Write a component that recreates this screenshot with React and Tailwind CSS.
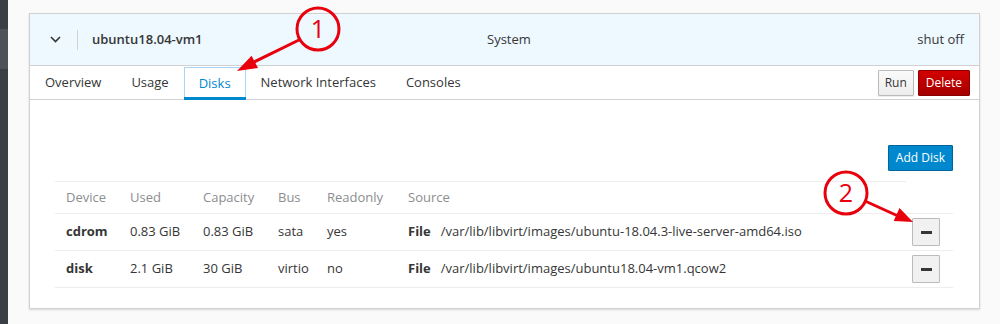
import React from 'react';

const font = { fontFamily: '"Open Sans", "Noto Sans", sans-serif' };

const disks = [
  { device: 'cdrom', used: '0.83 GiB', capacity: '0.83 GiB', bus: 'sata', readonly: 'yes', path: '/var/lib/libvirt/images/ubuntu-18.04.3-live-server-amd64.iso' },
  { device: 'disk', used: '2.1 GiB', capacity: '30 GiB', bus: 'virtio', readonly: 'no', path: '/var/lib/libvirt/images/ubuntu18.04-vm1.qcow2' },
];

const tabs = ['Overview', 'Usage', 'Disks', 'Network Interfaces', 'Consoles'];

const Annotations = () => (
  <svg className="absolute inset-0 pointer-events-none" width="1000" height="324" viewBox="0 0 1000 324">
    <g stroke="#e8000d" strokeWidth="3" fill="none">
      <circle cx="318" cy="29" r="21" />
      <line x1="301" y1="39" x2="252" y2="63" />
      <circle cx="846" cy="193" r="21" />
      <line x1="865" y1="201" x2="898" y2="216" />
    </g>
    <polygon points="237,71 258,68 251.6,55.7" fill="#e8000d" />
    <polygon points="913,222 893.7,220.9 899.5,208.1" fill="#e8000d" />
    <text x="318" y="38" textAnchor="middle" fill="#e8000d" fontSize="25" style={font}>1</text>
    <text x="846" y="202" textAnchor="middle" fill="#e8000d" fontSize="25" style={font}>2</text>
  </svg>
);

const App = () => {
  return (
    <div className="relative w-[1000px] h-[324px] flex bg-[#fafafa] overflow-hidden text-[#363636]" style={font}>
      <div className="w-[8px] flex flex-col bg-[#393f44]">
        <div className="h-[29px]" />
        <div className="h-[40px] bg-[#4d5258]" />
      </div>

      <div className="flex-1 pl-[21px] pr-[20px] pt-[13px]">
        <div className="bg-white border border-[#d1d1d1] shadow-[0_1px_2px_rgba(0,0,0,0.15)]">
          <div className="h-[52px] flex items-center bg-[#edf8ff] border-b border-[#d1d1d1] text-[13px]">
            <div className="w-[33px] flex justify-end pr-[2px]">
              <svg width="11" height="7" viewBox="0 0 11 7">
                <path d="M1 1l4.5 4.5L10 1" stroke="#363636" strokeWidth="1.6" fill="none" />
              </svg>
            </div>
            <div className="ml-[14px] w-px h-[20px] bg-[#d1d1d1]" />
            <div className="ml-[14px] w-[395px] font-semibold">ubuntu18.04-vm1</div>
            <div className="flex-1">System</div>
            <div className="pr-[15px]">shut off</div>
          </div>

          <div className="h-[34px] flex items-stretch border-b border-[#d1d1d1] text-[13px]">
            {tabs.map((t) =>
              t === 'Disks' ? (
                <div key={t} className="px-[14px] mt-px flex items-center border border-b-0 border-[#a9d4f5] text-[#0088ce] relative">
                  {t}
                  <div className="absolute left-[-1px] right-[-1px] bottom-[-1px] h-[3px] bg-[#0088ce]" />
                </div>
              ) : (
                <div key={t} className="px-[15px] flex items-center">{t}</div>
              )
            )}
            <div className="flex-1" />
            <div className="flex items-center gap-[4px] pr-[9px]">
              <button className="h-[26px] px-[6px] text-[12px] border border-[#bbb] rounded-[1px] bg-gradient-to-b from-[#fafafa] to-[#ededed] shadow-[0_1px_1px_rgba(3,3,3,0.08)]">Run</button>
              <button className="h-[26px] px-[7px] text-[12px] text-white border border-[#8b0000] rounded-[1px] bg-gradient-to-b from-[#d40000] to-[#a30000]">Delete</button>
            </div>
          </div>

          <div className="pt-[45px] pb-[20px] pl-[25px] pr-[26px] text-[13px]">
            <div className="flex justify-end mb-[10px]">
              <button className="h-[26px] px-[7px] text-[12px] text-white bg-[#0088ce] border border-[#00659c] rounded-[1px]">Add Disk</button>
            </div>
            <div className="border-t border-[#ededed] mr-[47px]" />
            <div className="h-[32px] grid grid-cols-[64px_73px_75px_49px_81px_1fr] items-center pl-[11px] text-[#8b8d8f] border-b border-[#ededed]">
              <div>Device</div>
              <div>Used</div>
              <div>Capacity</div>
              <div>Bus</div>
              <div>Readonly</div>
              <div>Source</div>
            </div>
            {disks.map((d) => (
              <div key={d.device} className="h-[37px] grid grid-cols-[64px_73px_75px_49px_81px_1fr] items-center pl-[11px] border-b border-[#ededed]">
                <div className="font-bold">{d.device}</div>
                <div>{d.used}</div>
                <div>{d.capacity}</div>
                <div>{d.bus}</div>
                <div>{d.readonly}</div>
                <div className="flex items-center">
                  <span className="font-bold">File</span>
                  <span className="ml-[10px] flex-1">{d.path}</span>
                  <button className="w-[28px] h-[28px] mr-[13px] flex items-center justify-center border border-[#bbb] rounded-[1px] bg-[#f1f1f1]">
                    <span className="w-[11px] h-[3px] bg-[#363636]" />
                  </button>
                </div>
              </div>
            ))}
          </div>
        </div>
      </div>

      <Annotations />
    </div>
  );
};

export default App;
